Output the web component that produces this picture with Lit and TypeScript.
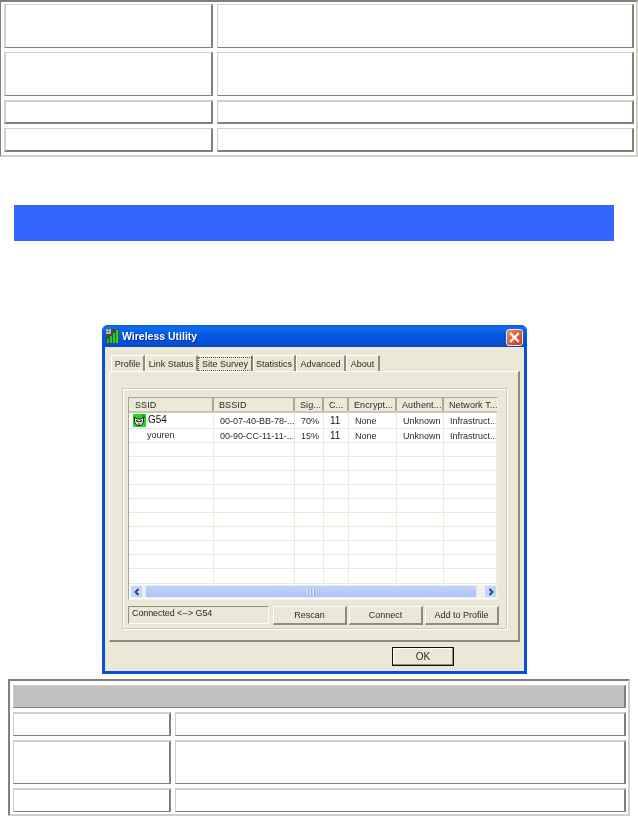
import { LitElement, html, css } from "lit";
import { customElement } from "lit/decorators.js";

const HEAD = ["SSID", "BSSID", "Sig...", "C...", "Encrypt...", "Authent...", "Network T..."];
const ROWS = [
  ["G54", "00-07-40-BB-78-...", "70%", "11", "None", "Unknown", "Infrastruct..."],
  ["youren", "00-90-CC-11-11-...", "15%", "11", "None", "Unknown", "Infrastruct..."],
];
const TABS = [
  ["Profile", 34],
  ["Link Status", 53],
  ["Site Survey", 55],
  ["Statistics", 43],
  ["Advanced", 50],
  ["About", 34],
] as const;

@customElement("app-root")
export class AppRoot extends LitElement {
  static styles = css`
    :host { display: block; width: 638px; height: 816px; overflow: hidden; background: #fff; }
    .tbl { box-sizing: border-box; display: grid; gap: 4px; }
    .top {
      width: 638px; height: 157px;
      border-style: solid; border-color: #808080 #d4d0c8 #d4d0c8 #808080;
      border-width: 2px 2px 2px 1px;
      padding: 2px 2px 3px 3px;
      grid-template-columns: 209px 417px;
      grid-template-rows: 44px 44px 24px 24px;
    }
    .bottom {
      width: 622px; height: 137px; margin: 5px 0 0 8px;
      border-style: solid; border-color: #808080 #d4d0c8 #d4d0c8 #808080;
      border-width: 2px;
      padding: 4px 2px 2px 3px;
      grid-template-columns: 158px 451px;
      grid-template-rows: 23px 24px 44px 24px;
    }
    .c {
      box-sizing: border-box; background: #fff;
      border-style: solid; border-color: #d4d0c8 #808080 #808080 #d4d0c8;
      border-width: 1px 2px 1px 1px;
    }
    .wl { border-left-width: 2px; }
    .tt { border-top-width: 2px; }
    .bb { border-bottom-width: 2px; }
    .hd { grid-column: 1 / span 2; background: #c0c0c0; }
    .band { width: 600px; height: 36px; margin: 48px 0 0 14px; background: #3366ff; }

    .win {
      box-sizing: border-box; width: 425px; height: 349px; margin: 84px 0 0 102px;
      background: #0a4fdc;
      border-radius: 6px 6px 0 0;
      padding: 0 3px 3px;
      display: flex; flex-direction: column;
      font: 9px "Liberation Sans", Arial, sans-serif; color: #2a2a2a;
      filter: blur(0.35px);
    }
    .title {
      height: 22px; flex: none; display: flex; align-items: center; gap: 3px;
      margin: 0 -3px; padding: 0 4px 0 4px;
      border-radius: 6px 6px 0 0;
      background: linear-gradient(#0a5be6 0%, #0d6df2 12%, #0658de 45%, #0450d8 80%, #0a46c0 100%);
      color: #fff; font: bold 10.5px "Liberation Sans", Arial, sans-serif;
      text-shadow: 1px 1px 0 #0a2f98;
    }
    .title svg { flex: none; display: block; }
    .title span { flex: 1; }
    .close { margin-top: 2px; }
    .body {
      flex: 1; min-height: 0; display: flex; flex-direction: column;
      background-color: #ece9d8;
      background-image: radial-gradient(circle at 1px 1px, #e6e3d2 0.6px, transparent 0.9px);
      background-size: 4px 4px;
    }
    .tabs { display: flex; height: 16px; margin: 8px 0 0 6px; position: relative; z-index: 1; }
    .tab {
      box-sizing: border-box; height: 16px; display: flex; align-items: center; justify-content: center;
      border-top: 1px solid #fff; border-left: 1px solid #fff;
      border-right: 2px solid #8f8c7e;
      white-space: nowrap; padding-top: 1px;
    }
    .tab.on { position: relative; }
    .tab.on span { outline: 1px dotted #555; outline-offset: 1px; padding: 0 2px; }
    .panel {
      box-sizing: border-box; width: 411px; height: 271px; margin-left: 4px; flex: none;
      border-style: solid; border-color: #fff #8f8c7e #8f8c7e #fff; border-width: 1px 2px 2px 1px;
      padding: 16px 0 0 12px;
    }
    .group {
      box-sizing: border-box; width: 385px; height: 241px;
      border: 1px solid #d0cdbc; box-shadow: 1px 1px 0 #fff, inset 1px 1px 0 #fff;
      padding: 8px 0 0 5px;
    }
    .list {
      box-sizing: border-box; width: 370px; height: 203px; background: #fff;
      border-style: solid; border-color: #a9a694 #f4f2e8 #f4f2e8 #a9a694; border-width: 1px;
      display: flex; flex-direction: column;
    }
    .lhead, .lrow { display: grid; grid-template-columns: 84px 81px 29px 25px 48px 47px 53px; }
    .lhead { height: 13px; flex: none; background: #ece9d8; border-bottom: 2px solid #c9c6b5; padding-left: 1px; }
    .lhead div {
      box-sizing: border-box; padding-left: 5px; white-space: nowrap; line-height: 14px;
      border-right: 2px solid #a9a694; letter-spacing: 0.1px; overflow: hidden;
    }
    .lhead div:last-child { border-right: 0; }
    .lrows { flex: 1; min-height: 0; overflow: hidden; }
    .lrow { box-sizing: border-box; height: 14.1px; border-bottom: 1px solid #ece9d8; padding-left: 1px; }
    .lrow:first-child { height: 15.5px; }
    .lrow div {
      box-sizing: border-box; border-right: 1px solid #ece9d8; white-space: nowrap;
      padding-left: 6px; line-height: 14px; overflow: hidden;
    }
    .lrow:first-child div { line-height: 16px; }
    .lrow div:first-child { display: flex; align-items: center; gap: 2px; padding-left: 3px; }
    .lrow:first-child div:first-child { font-size: 10px; color: #111; }
    .lrow div:nth-child(4) { font-size: 10px; color: #111; }
    .lrow:nth-child(2) div:first-child { padding-left: 17px; }
    .scroll {
      flex: none; height: 13px; margin: 0 0 1px 1px; display: flex; gap: 1px; align-items: stretch;
      background: #f3f2ea;
    }
    .sbtn {
      flex: none; width: 13px; box-sizing: border-box; border-radius: 2px;
      background: #c4d5f8; border: 1px solid #e8effc;
      display: flex; align-items: center; justify-content: center;
    }
    .thumb {
      width: 332px; flex: none; margin-left: 1px; border-radius: 2px; box-sizing: border-box;
      background: linear-gradient(#c2d3f7, #b5c9f5 60%, #aec4f3);
      border: 1px solid #dfe8fb;
      display: flex; align-items: center; justify-content: center; gap: 1px;
    }
    .thumb i { display: block; width: 1px; height: 6px; background: #eef3fd; box-shadow: 1px 0 0 #8ba8e4; margin-right: 1px; }
    .track { flex: 1; }
    .foot { display: flex; margin-top: 6px; gap: 2px; }
    .status {
      box-sizing: border-box; width: 141px; height: 18px; margin-right: 2px;
      border-style: solid; border-color: #8f8c7e #fff #fff #8f8c7e; border-width: 1px;
      padding: 0 0 0 3px; line-height: 13px; letter-spacing: -0.1px;
    }
    .btn {
      box-sizing: border-box; width: 74px; height: 19px; display: flex; align-items: center; justify-content: center;
      border-style: solid; border-color: #fff #8f8c7e #8f8c7e #fff; border-width: 1px 2px 2px 1px;
      white-space: nowrap;
    }
    .okrow { display: flex; justify-content: flex-end; margin: 5px 70px 0 0; }
    .ok {
      box-sizing: border-box; width: 62px; height: 19px; display: flex; align-items: center; justify-content: center;
      border: 1px solid #111;
      box-shadow: inset -1px -1px 0 #8f8c7e, inset 1px 1px 0 #fff;
      font-size: 10px;
    }
  `;

  private antenna() {
    return html`<svg width="13" height="14" viewBox="0 0 13 14">
      <rect width="13" height="14" fill="#4a4a40"/>
      <rect x="0" y="0" width="5" height="5" fill="#b9b8a8"/>
      <rect x="2" y="0" width="1" height="1" fill="#4a4a40"/>
      <rect x="0" y="2" width="1" height="1" fill="#4a4a40"/>
      <rect x="2" y="2" width="1" height="1" fill="#4a4a40"/>
      <rect x="1" y="10" width="2" height="4" fill="#10c810"/>
      <rect x="4" y="7" width="2" height="7" fill="#10d810"/>
      <rect x="7" y="4" width="2" height="10" fill="#10e010"/>
      <rect x="10" y="1" width="2" height="13" fill="#10e810"/>
    </svg>`;
  }

  private cat() {
    return html`<svg width="13" height="13" viewBox="0 0 13 13" style="flex:none">
      <rect width="13" height="13" fill="#18e018"/>
      <path d="M1.5 3 L4 5 H8 L10.5 3 L10.5 8 L8 11.5 H4 L1.5 8 Z" fill="#e4e4e4" stroke="#222" stroke-width="1"/>
      <path d="M3 6.5 L5.5 7.8 M9 6.5 L6.5 7.8" stroke="#111" stroke-width="1.3"/>
      <path d="M9.5 1 L12.5 3.5" stroke="#555" stroke-width="1.2"/>
      <rect x="5" y="9.5" width="2" height="1" fill="#222"/>
    </svg>`;
  }

  private close() {
    return html`<svg class="close" width="17" height="17" viewBox="0 0 17 17">
      <defs><linearGradient id="cg" x1="0" y1="0" x2="1" y2="1">
        <stop offset="0" stop-color="#f09070"/><stop offset=".5" stop-color="#e2582f"/><stop offset="1" stop-color="#cc3c14"/>
      </linearGradient></defs>
      <rect x=".5" y=".5" width="16" height="16" rx="2.5" fill="url(#cg)" stroke="#e8e8f0"/>
      <path d="M5 5 L12 12 M12 5 L5 12" stroke="#fff" stroke-width="2.4" stroke-linecap="square"/>
    </svg>`;
  }

  render() {
    const empty = Array.from({ length: 11 });
    return html`
      <div class="tbl top">
        <div class="c wl"></div><div class="c"></div>
        <div class="c wl"></div><div class="c"></div>
        <div class="c wl tt bb"></div><div class="c tt bb"></div>
        <div class="c wl bb"></div><div class="c bb"></div>
      </div>
      <div class="band"></div>
      <div class="win">
        <div class="title">${this.antenna()}<span>Wireless Utility</span>${this.close()}</div>
        <div class="body">
          <div class="tabs">
            ${TABS.map(
              ([t, w]) => html`<div class="tab ${t === "Site Survey" ? "on" : ""}" style="width:${w}px"><span>${t}</span></div>`
            )}
          </div>
          <div class="panel">
            <div class="group">
              <div class="list">
                <div class="lhead">${HEAD.map((h) => html`<div>${h}</div>`)}</div>
                <div class="lrows">
                  ${ROWS.map(
                    (r, i) => html`<div class="lrow">
                      ${r.map((v, j) => html`<div>${j === 0 && i === 0 ? this.cat() : ""}${v}</div>`)}
                    </div>`
                  )}
                  ${empty.map(() => html`<div class="lrow">${HEAD.map(() => html`<div></div>`)}</div>`)}
                </div>
                <div class="scroll">
                  <div class="sbtn"><svg width="8" height="8" viewBox="0 0 8 8"><path d="M5.5 1 L2.5 4 L5.5 7" fill="none" stroke="#1f3f80" stroke-width="1.8"/></svg></div>
                  <div class="thumb"><i></i><i></i><i></i></div>
                  <div class="track"></div>
                  <div class="sbtn"><svg width="8" height="8" viewBox="0 0 8 8"><path d="M2.5 1 L5.5 4 L2.5 7" fill="none" stroke="#1f3f80" stroke-width="1.8"/></svg></div>
                </div>
              </div>
              <div class="foot">
                <div class="status">Connected &lt;--&gt; G54</div>
                <div class="btn">Rescan</div>
                <div class="btn">Connect</div>
                <div class="btn">Add to Profile</div>
              </div>
            </div>
          </div>
          <div class="okrow"><div class="ok">OK</div></div>
        </div>
      </div>
      <div class="tbl bottom">
        <div class="c hd"></div>
        <div class="c tt"></div><div class="c tt"></div>
        <div class="c tt"></div><div class="c tt"></div>
        <div class="c tt"></div><div class="c tt"></div>
      </div>
    `;
  }
}
